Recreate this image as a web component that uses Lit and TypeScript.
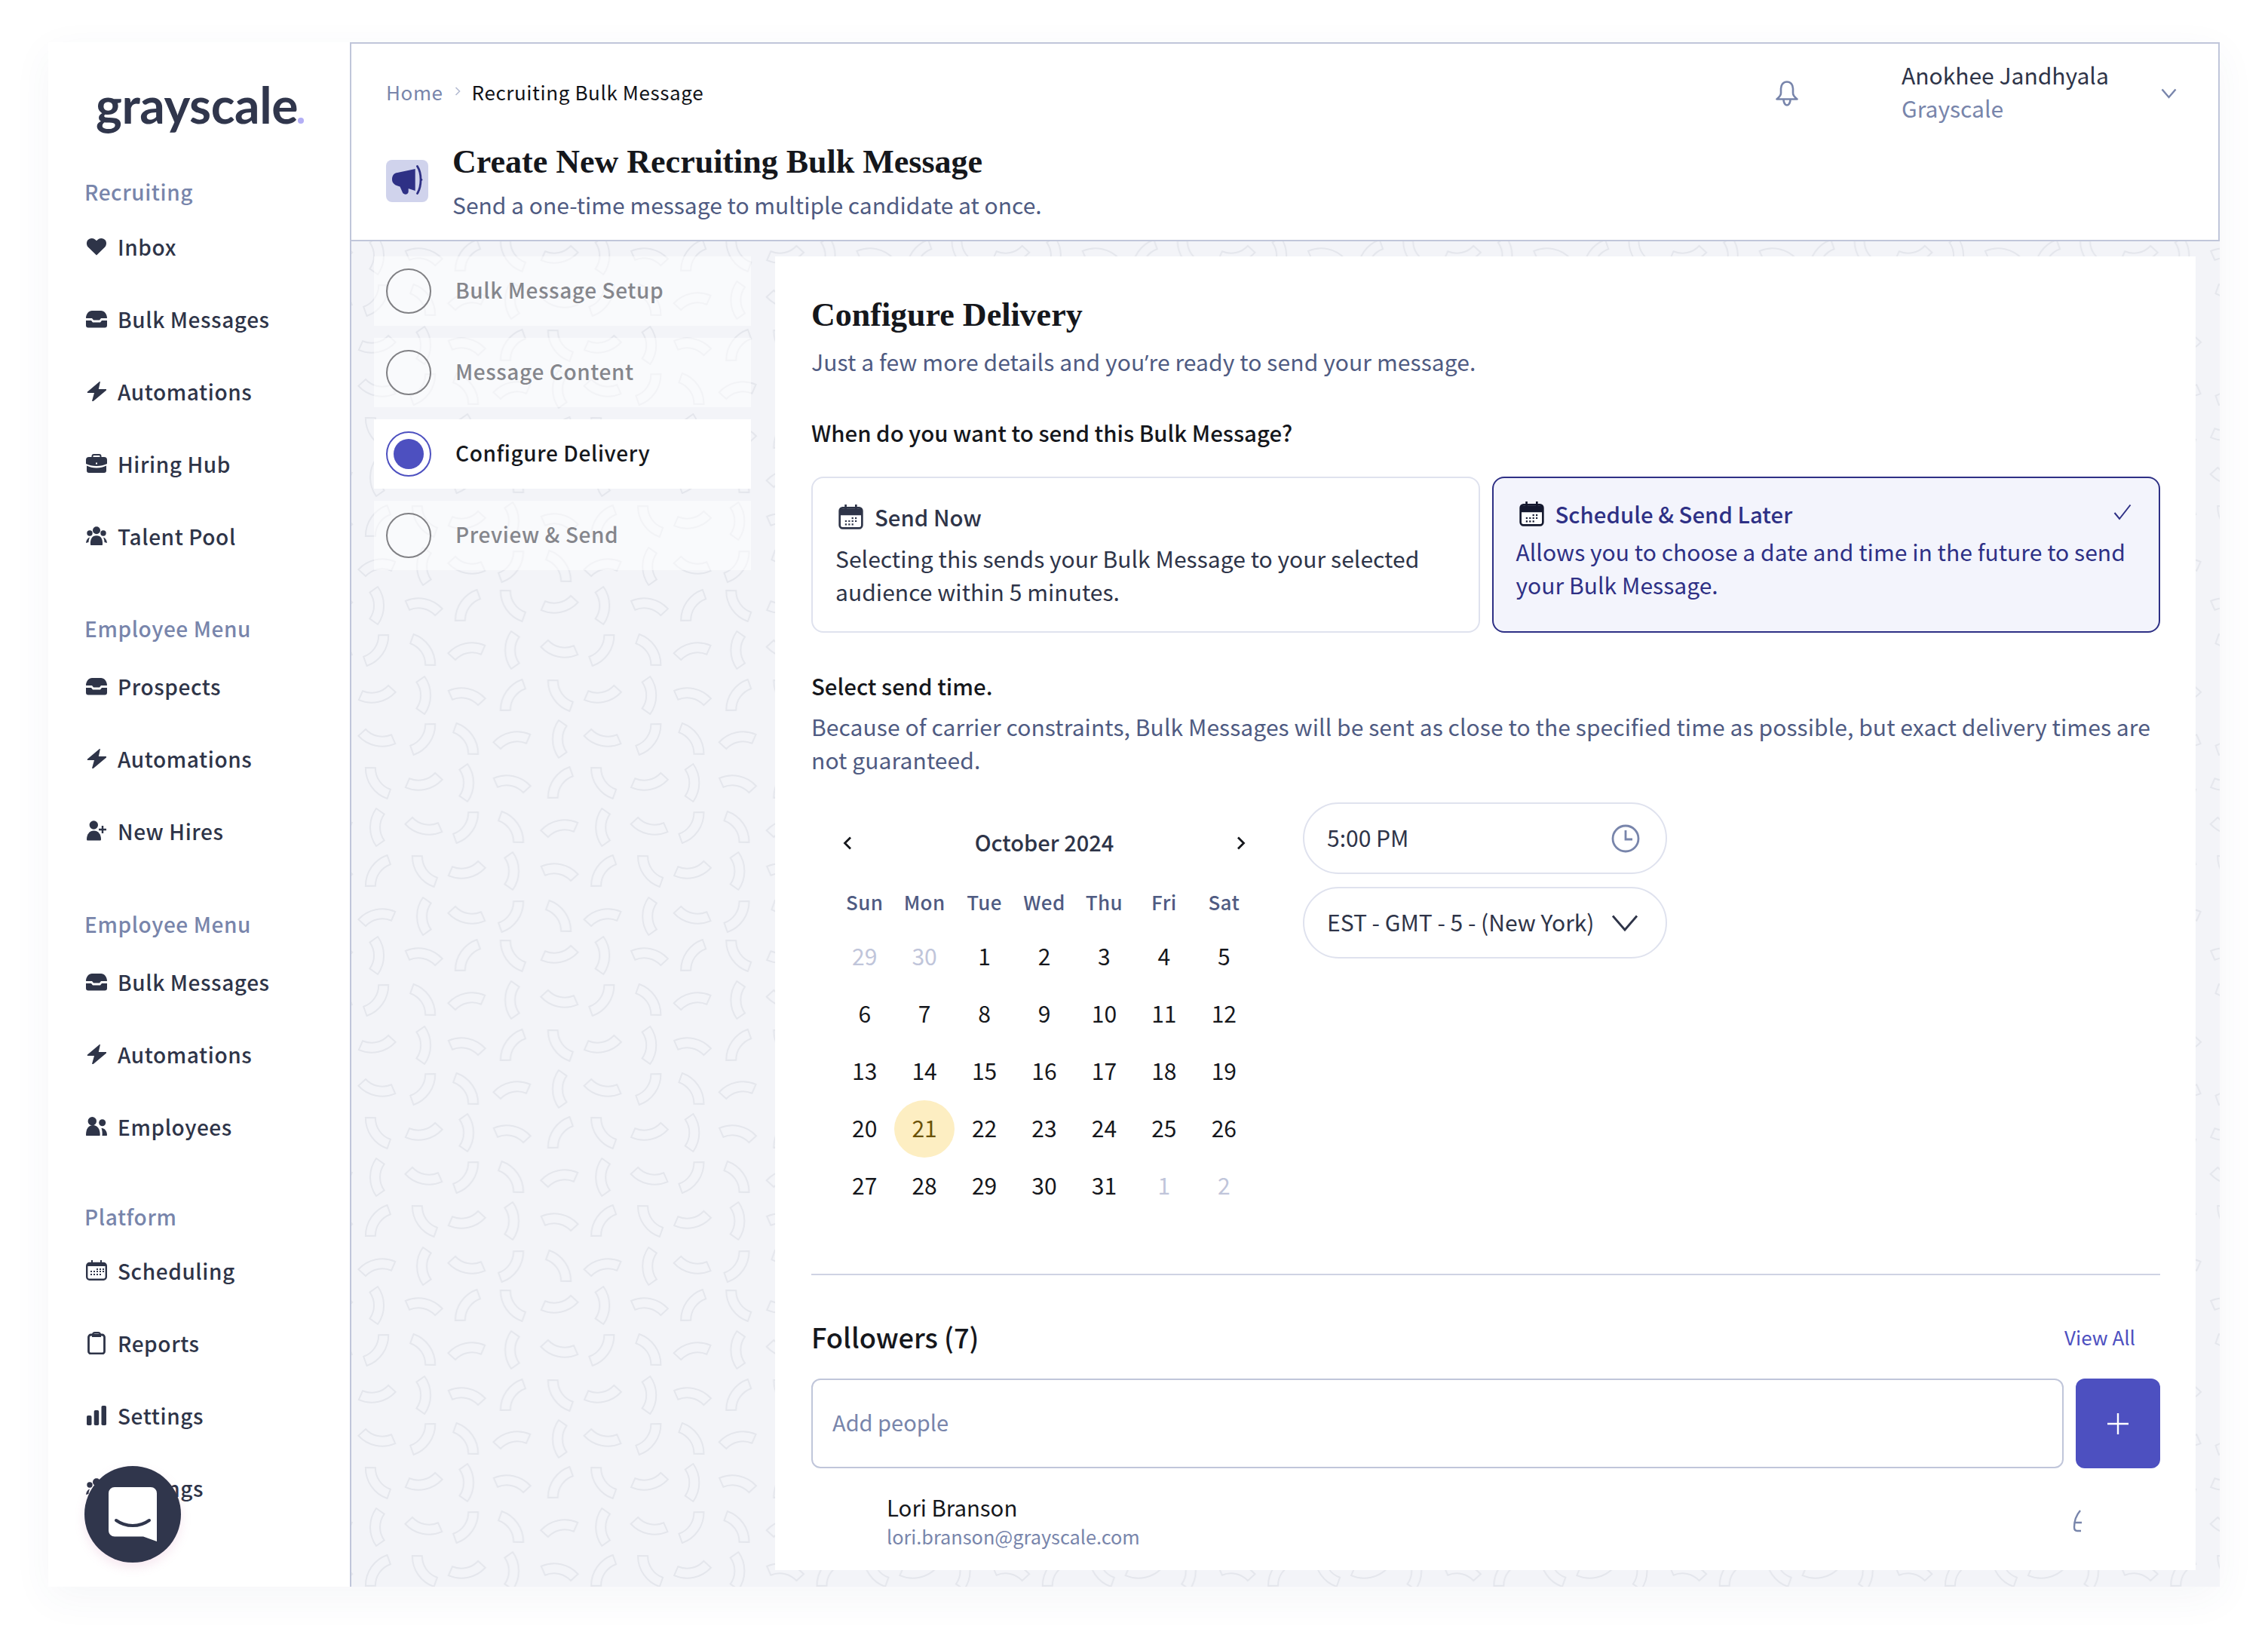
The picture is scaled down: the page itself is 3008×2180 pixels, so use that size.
import { LitElement, html, css, svg } from "lit";
import { customElement } from "lit/decorators.js";

const ICONS: Record<string, any> = {
  heart: svg`<path d="M14 24.5 3.200 14C.4 11.200.2 6.800 2.800 4 5.500 1.200 10 1.200 12.600 3.900L14 5.300l1.400-1.400C18 1.200 22.500 1.200 25.200 4c2.600 2.800 2.400 7.200-.4 10Z" fill="currentColor"/>`,
  inbox: svg`<path d="M0 11C0 5 4 1 8 1h12c4 0 8 4 8 10h-8l-2 2.400h-8L8 11Z" fill="currentColor"/><path d="M0 14h7l2 2.400h10L21 14h7v6.500a3 3 0 0 1-3 3H3a3 3 0 0 1-3-3Z" fill="currentColor"/>`,
  bolt: svg`<path d="M17 0 1 13.500c-.6.6-.3 1.500.5 1.500H10L7.200 25c-.3 1 .8 1.600 1.500 1L26 11.500c.6-.6.3-1.500-.5-1.500H15.800L17.800.8c.2-.8-.2-1.200-.8-.8Z" fill="currentColor"/>`,
  brief: svg`<path d="M8.500 4.500V3a2 2 0 0 1 2-2h7a2 2 0 0 1 2 2v1.500" fill="none" stroke="currentColor" stroke-width="2"/><path d="M0 8a4 4 0 0 1 4-4h20a4 4 0 0 1 4 4v5c-4 2-9 3-14 3s-10-1-14-3Z" fill="currentColor"/><path d="M1 15.500c4 2 8 3 13 3s9-1 13-3V22a3 3 0 0 1-3 3H4a3 3 0 0 1-3-3Z" fill="currentColor"/><path d="M13 11.500h2v2h-2Z" fill="#fff"/>`,
  users: svg`<circle cx="14" cy="5.200" r="5" fill="currentColor"/><circle cx="5" cy="9" r="3.700" fill="currentColor"/><circle cx="23" cy="9" r="3.700" fill="currentColor"/><path d="M6 24c-.5-7 2-11.700 8-11.700S22.500 17 22 24c0 .6-.5 1-1 1H7c-.5 0-1-.4-1-1Z" fill="currentColor"/><path d="M0 22c.5-4 2-6.500 5-7.500-1 2.500-1.500 4.500-1.500 6.500ZM28 22c-.5-4-2-6.500-5-7.500 1 2.500 1.500 4.500 1.500 6.500Z" fill="currentColor"/>`,
  add: svg`<circle cx="10.300" cy="6" r="5.700" fill="currentColor"/><path d="M1 25c0-7 4-11.500 9.500-11.500S20 18 20 25c0 1-.6 1.500-1.500 1.500h-16C1.600 26.500 1 26 1 25Z" fill="currentColor"/><path d="M22 7v10M17 12h10" stroke="currentColor" stroke-width="2.400" fill="none"/>`,
  team: svg`<circle cx="8.300" cy="5.800" r="5.700" fill="currentColor"/><circle cx="21.700" cy="7.700" r="4.500" fill="currentColor"/><path d="M0 24c0-8 3.500-13 9.300-13s9.400 5 9.400 13c0 .6-.4 1-1 1H1c-.6 0-1-.4-1-1Z" fill="currentColor"/><path d="M20.500 15c4-.5 7.500 4 7.500 9 0 .5-.4 1-1 1h-5.500c.5-3.500 0-7-1-10Z" fill="currentColor"/>`,
  cal: svg`<rect x="1.200" y="4" width="25.600" height="21.800" rx="3.500" fill="none" stroke="currentColor" stroke-width="2.400"/><path d="M2 5h24v3H2ZM7 0h2v5H7ZM19 0h2v5h-2Z" fill="currentColor"/><path d="M6 14h2v2H6ZM10 14h2v2h-2ZM14 14h2v2h-2ZM18 14h2v2h-2ZM22 14h2v2h-2ZM6 18h2v2H6ZM10 18h2v2h-2ZM14 18h2v2h-2ZM18 18h2v2h-2ZM14 11h2v2h-2ZM18 11h2v2h-2ZM22 11h2v2h-2Z" fill="currentColor"/>`,
  clip: svg`<rect x="1.500" y="4" width="21" height="25" rx="3" fill="none" stroke="currentColor" stroke-width="2.800"/><path d="M7 4c0-2 1.500-3 3-3h4c1.500 0 3 1 3 3v2H7Z" fill="none" stroke="currentColor" stroke-width="2"/>`,
  bars: svg`<rect x="0" y="13" width="6.500" height="13" rx="1.800" fill="currentColor"/><rect x="9.700" y="6" width="6.500" height="20" rx="1.800" fill="currentColor"/><rect x="19.500" y="0" width="6.500" height="26" rx="1.800" fill="currentColor"/>`,
};
const ICON_BOX: Record<string, number[]> = {
  heart: [28, 26], inbox: [28, 24], bolt: [26, 26], brief: [28, 26], users: [28, 26], add: [28, 27], team: [28, 25], cal: [28, 27], clip: [24, 30], bars: [26, 26],
};

const icon = (name: string) => {
  const [w, h] = ICON_BOX[name];
  return html`<svg class="ic" width=${w} height=${h} viewBox="0 0 ${w} ${h}">${ICONS[name]}</svg>`;
};

const NAV = [
  { title: "Recruiting", items: [["heart", "Inbox"], ["inbox", "Bulk Messages"], ["bolt", "Automations"], ["brief", "Hiring Hub"], ["users", "Talent Pool"]] },
  { title: "Employee Menu", items: [["inbox", "Prospects"], ["bolt", "Automations"], ["add", "New Hires"]] },
  { title: "Employee Menu", items: [["inbox", "Bulk Messages"], ["bolt", "Automations"], ["team", "Employees"]] },
  { title: "Platform", items: [["cal", "Scheduling"], ["clip", "Reports"], ["bars", "Settings"], ["users", "Settings"]] },
];

const STEPS = [
  ["Bulk Message Setup", false],
  ["Message Content", false],
  ["Configure Delivery", true],
  ["Preview & Send", false],
] as const;

const WEEK = ["Sun", "Mon", "Tue", "Wed", "Thu", "Fri", "Sat"];
const DAYS: [string, string][] = [
  ["29", "off"], ["30", "off"],
  ...Array.from({ length: 31 }, (_, i) => [String(i + 1), i === 20 ? "today" : ""] as [string, string]),
  ["1", "off"], ["2", "off"],
];

const rad = (d: number) => (d * Math.PI) / 180;
const pt = (r: number, a: number) => `${(r * Math.cos(rad(a))).toFixed(2)} ${(r * Math.sin(rad(a)) - 34).toFixed(2)}`;
const ARC = `M${pt(43, 125.5)}A43 43 0 0 0 ${pt(43, 54.5)}L${pt(30, 54.5)}A30 30 0 0 1 ${pt(30, 125.5)}Z`;
const PAT_X = [29, 91, 148, 208, 271];
const PAT_ROWS: [number, number[]][] = [
  [32, [12, -55, -125, 168, 90]],
  [90, [55, -12, -90, 192, 125]],
  [149, [90, 12, -55, -125, 168]],
  [207, [125, 55, -12, -90, 192]],
  [267, [168, 90, 12, -55, -125]],
  [319, [-90, 192, 125, 55, -12]],
  [378, [-55, -125, 168, 90, 12]],
  [438, [-12, -90, 192, 125, 55]],
];

const pattern = html`<svg class="pattern" width="100%" height="100%">
  <defs>
    <pattern id="arcs" width="299.3" height="464" patternUnits="userSpaceOnUse" patternTransform="translate(5 1092)">
      ${PAT_ROWS.map(([y, row]) =>
        row.map((a, i) => svg`<path d=${ARC} transform="translate(${PAT_X[i]} ${y}) rotate(${a})" fill="none" stroke="#e4e6ec" stroke-width="2"/>`)
      )}
    </pattern>
  </defs>
  <rect width="100%" height="100%" fill="url(#arcs)"/>
</svg>`;

const bigCal = html`<svg class="cardic" width="33" height="33" viewBox="0 0 30 30">
  <rect x="1.500" y="4" width="27" height="24.500" rx="3.500" fill="#fff" stroke="currentColor" stroke-width="2.400"/>
  <path d="M2 5h26v8H2ZM7.500 0h2.400v6H7.500ZM20 0h2.400v6H20Z" fill="currentColor"/>
  <path d="M8 19h2v2H8ZM12 19h2v2h-2ZM16 19h2v2h-2ZM20 19h2v2h-2ZM8 23h2v2H8ZM12 23h2v2h-2ZM16 23h2v2h-2ZM16 15.500h2v2h-2ZM20 15.500h2v2h-2Z" fill="currentColor"/>
</svg>`;

@customElement("app-root")
export class AppRoot extends LitElement {
  static styles = css`
    :host {
      display: block;
      width: 3008px;
      height: 2180px;
      background: #fff;
      font-family: "Noto Sans CJK SC", "Noto Sans", sans-serif;
      color: #2e3448;
      padding: 56px 0 0 64px;
      box-sizing: border-box;
    }
    * { box-sizing: border-box; }
    .shell {
      display: flex;
      width: 2880px;
      height: 2048px;
      background: #fff;
      box-shadow: 0 14px 50px rgba(60, 70, 110, 0.05);
    }
    .side {
      position: relative;
      width: 400px;
      flex: none;
      padding-left: 48px;
      background: #fff;
    }
    .logo {
      display: flex;
      align-items: baseline;
      height: 175px;
      padding: 41px 0 0 15px;
      font-family: "Lato", sans-serif;
      font-weight: 700;
      font-size: 66px;
      line-height: 84px;
      letter-spacing: -0.4px;
      color: #30364c;
    }
    .logo i {
      width: 8px;
      height: 8px;
      margin-left: 0;
      border-radius: 50%;
      background: #b3aef5;
    }
    .sec-title {
      height: 48px;
      line-height: 46px;
      font-size: 28px;
      font-weight: 500;
      letter-spacing: 0.6px;
      color: #7885ab;
    }
    .sec:nth-of-type(1) .sec-title { margin-bottom: 1px; }
    .sec:nth-of-type(2) { margin-top: 50px; }
    .sec:nth-of-type(2) .sec-title { margin-bottom: 5px; }
    .sec:nth-of-type(3) { margin-top: 51px; }
    .sec:nth-of-type(3) .sec-title { margin-bottom: 5px; }
    .sec:nth-of-type(4) { margin-top: 47px; }
    .item {
      display: flex;
      align-items: center;
      height: 96px;
      padding-bottom: 3px;
      font-size: 28px;
      font-weight: 500;
      letter-spacing: 0.6px;
    }
    .ibox {
      display: flex;
      justify-content: center;
      width: 30px;
      margin: 0 13px 0 1px;
      flex: none;
    }
    .chat {
      position: absolute;
      left: 48px;
      top: 1888px;
      width: 128px;
      height: 128px;
      border-radius: 50%;
      background: #30364c;
      box-shadow: 0 6px 14px rgba(210, 120, 170, 0.18);
      display: flex;
      align-items: center;
      justify-content: center;
    }
    .main {
      flex: 1;
      display: flex;
      flex-direction: column;
      min-width: 0;
      border-left: 2px solid #c0c6da;
    }
    .head {
      display: flex;
      justify-content: space-between;
      height: 264px;
      margin-left: -2px;
      padding-left: 46px;
      background: #fff;
      border: 2px solid #c0c6da;
    }
    .crumbs {
      display: flex;
      align-items: center;
      height: 40px;
      margin-top: 44px;
      padding-bottom: 2px;
      font-size: 26px;
      letter-spacing: 0.6px;
      color: #111318;
    }
    .crumbs a { color: #7885ab; }
    .crumbs svg { margin: 0 15px; }
    .titleRow {
      display: flex;
      align-items: center;
      gap: 32px;
      margin-top: 45px;
    }
    .mega {
      display: flex;
      width: 56px;
      height: 56px;
      border-radius: 8px;
      background: #d0d3ec;
    }
    h1, h2 {
      margin: 0;
      font-family: "Liberation Serif", serif;
      font-weight: 700;
      font-size: 44px;
      color: #15171c;
    }
    h1 { line-height: 56px; }
    h2 { line-height: 60px; }
    .sub {
      font-size: 30px;
      line-height: 44px;
      color: #4f5b82;
    }
    .apos { font-family: "Open Sans", sans-serif; }
    .titleRow .sub { margin-top: 6px; }
    .user {
      display: flex;
      align-items: center;
      align-self: flex-start;
      padding: 22px 55px 0 0;
    }
    .user .bell { margin-right: 137px; }
    .who {
      width: 344px;
      margin: -3px 0 3px;
      font-size: 30px;
      line-height: 44px;
    }
    .who span { display: block; color: #7885ab; }
    .body {
      position: relative;
      flex: 1;
      min-height: 0;
      display: flex;
      gap: 32px;
      padding: 20px 32px 22px 30px;
      background: #f3f4f8;
      overflow: hidden;
    }
    .pattern { position: absolute; inset: 0; }
    .steps {
      position: relative;
      display: flex;
      flex-direction: column;
      gap: 16px;
      width: 500px;
      flex: none;
    }
    .step {
      display: flex;
      align-items: center;
      gap: 32px;
      height: 92px;
      padding-left: 16px;
      background: rgba(255, 255, 255, 0.5);
      font-size: 28px;
      font-weight: 500;
      color: #85868c;
      letter-spacing: 0.6px;
    }
    .step .l { margin-top: -4px; }
    .step.on { background: #fff; color: #15171c; }
    .dot {
      display: flex;
      align-items: center;
      justify-content: center;
      width: 60px;
      height: 60px;
      border-radius: 50%;
      border: 2px solid #808084;
    }
    .on .dot { border-color: #4d50c0; }
    .on .dot::after {
      content: "";
      width: 40px;
      height: 40px;
      border-radius: 50%;
      background: #4d50c0;
    }
    .content {
      position: relative;
      flex: 1;
      min-width: 0;
      padding: 48px 47px 0 48px;
      background: #fff;
      overflow: hidden;
    }
    .content > .sub { margin-top: 9px; letter-spacing: 0.1px; }
    .q {
      font-size: 29.4px;
      line-height: 44px;
      font-weight: 500;
      color: #15171c;
    }
    .q.first { margin-top: 48px; }
    .cards {
      display: flex;
      gap: 16px;
      margin-top: 37px;
    }
    .card {
      position: relative;
      flex: 1;
      height: 207px;
      padding: 29px 30px 0;
      border: 2px solid #dfe2ee;
      border-radius: 16px;
      font-size: 30px;
      line-height: 44px;
      letter-spacing: 0.05px;
    }
    .card.sel {
      padding-top: 25px;
      border-color: #2e3085;
      background: #f3f4fc;
      color: #2e3085;
    }
    .cardT {
      display: flex;
      align-items: center;
      gap: 15px;
      height: 44px;
      margin-bottom: 11px;
      padding-left: 4px;
      font-size: 29.3px;
      font-weight: 500;
    }
    .sel .cardT { margin-bottom: 6px; }
    .sel .cardic { color: #14182e; }
    .check { position: absolute; right: 36px; top: 34px; }
    .q.time { margin-top: 48px; }
    .desc {
      margin-top: 10px;
      font-size: 30px;
      line-height: 44px;
      letter-spacing: 0.09px;
      color: #4f5b82;
    }
    .when {
      display: flex;
      gap: 65px;
      margin-top: 35px;
      align-items: flex-start;
    }
    .calendar {
      width: 556px;
      margin-left: 31px;
      flex: none;
    }
    .month {
      display: flex;
      align-items: center;
      justify-content: space-between;
      height: 108px;
      padding: 0 11px 4px;
      font-size: 29px;
      font-weight: 500;
    }
    .month svg { margin-top: 4px; }
    .grid {
      display: grid;
      grid-template-columns: repeat(7, 1fr);
      text-align: center;
    }
    .wk {
      height: 52px;
      margin-bottom: 7px;
      line-height: 48px;
      font-size: 26px;
      font-weight: 500;
      color: #4f5b82;
      letter-spacing: 0.4px;
    }
    .d {
      height: 76px;
      line-height: 72px;
      font-size: 30px;
      color: #15171c;
      border-radius: 50%;
    }
    .d.off { color: #c0c5da; }
    .d.today { background: #fdeec2; color: #6b5208; }
    .fields {
      display: flex;
      flex-direction: column;
      gap: 17px;
      width: 483px;
    }
    .field {
      display: flex;
      align-items: center;
      justify-content: space-between;
      height: 95px;
      padding: 0 34px 4px 30px;
      border: 2px solid #dfe2ee;
      border-radius: 48px;
      font-size: 30px;
      color: #2e3448;
    }
    .field svg { margin-top: 4px; }
    .field.tz { padding-right: 36px; }
    .rule {
      height: 2px;
      margin-top: 78px;
      background: #cfd3e3;
    }
    .fhead {
      display: flex;
      align-items: center;
      justify-content: space-between;
      height: 60px;
      margin-top: 53px;
      padding: 0 33px 4px 0;
      font-size: 36.2px;
      font-weight: 500;
      color: #15171c;
    }
    .fhead a {
      font-size: 26px;
      font-weight: 400;
      color: #4d50c0;
    }
    .addRow {
      display: flex;
      gap: 16px;
      margin-top: 24px;
    }
    .input {
      flex: 1;
      display: flex;
      align-items: center;
      height: 119px;
      padding: 0 0 6px 26px;
      border: 2px solid #c0c6da;
      border-radius: 12px;
      font-size: 29px;
      color: #7885ab;
    }
    .plus {
      display: flex;
      align-items: center;
      justify-content: center;
      width: 112px;
      height: 119px;
      border-radius: 12px;
      background: #4d50c0;
    }
    .person {
      position: relative;
      margin-top: 29px;
      padding-left: 100px;
    }
    .person b {
      display: block;
      font-size: 29.4px;
      line-height: 44px;
      font-weight: 400;
      color: #15171c;
    }
    .person span {
      display: block;
      margin-top: -3px;
      font-size: 25.3px;
      line-height: 40px;
      color: #7885ab;
    }
    .frag { position: absolute; left: 1672px; top: 25px; }
  `;

  render() {
    return html`<div class="shell">
      <aside class="side">
        <div class="logo">grayscale<i></i></div>
        ${NAV.map(
          (s) => html`<section class="sec">
            <div class="sec-title">${s.title}</div>
            ${s.items.map((it) => html`<div class="item"><span class="ibox">${icon(it[0])}</span>${it[1]}</div>`)}
          </section>`
        )}
        <div class="chat">
          <svg width="64" height="72" viewBox="0 0 64 72">
            <path d="M8 0h48a8 8 0 0 1 8 8v64L46 65.500H8a8 8 0 0 1-8-8V8a8 8 0 0 1 8-8Z" fill="#fff"/>
            <path d="M10 44c7 5 14 7 22 7s15-2 22-7" fill="none" stroke="#30364c" stroke-width="4" stroke-linecap="round"/>
          </svg>
        </div>
      </aside>
      <div class="main">
        <header class="head">
          <div>
            <div class="crumbs">
              <a>Home</a>
              <svg width="8" height="12" viewBox="0 0 8 12"><path d="M1.500 1 6.500 6l-5 5" fill="none" stroke="#b4bbd2" stroke-width="1.600"/></svg>
              <span>Recruiting Bulk Message</span>
            </div>
            <div class="titleRow">
              <div class="mega">
                <svg width="56" height="56" viewBox="0 0 56 56">
                  <path d="M8 26C8 20 11 17.500 15 17L38.700 12V41L29.700 38V42C29.700 46 24 47 22 43.500L18.500 35.500C12 34 8 31 8 26Z" fill="#2e3085"/>
                  <path d="M41.500 8.500C45 14 46 20 46 26C46 33 45 39 41.500 44.500" fill="none" stroke="#2e3085" stroke-width="2.800" stroke-linecap="round"/>
                  <circle cx="46.800" cy="26.300" r="1.500" fill="#2e3085"/>
                </svg>
              </div>
              <div>
                <h1>Create New Recruiting Bulk Message</h1>
                <div class="sub">Send a one-time message to multiple candidate at once.</div>
              </div>
            </div>
          </div>
          <div class="user">
            <svg class="bell" width="30" height="34" viewBox="0 0 30 34" fill="none" stroke="#7885ab" stroke-width="2.600" stroke-linejoin="round">
              <path d="M15 1.500c-5 0-8 4-8 9v6c0 3-2.500 5.500-5.500 8h27c-3-2.500-5.500-5-5.500-8v-6c0-5-3-9-8-9Z"/>
              <path d="M10.500 25c0 4 2 7.500 4.500 7.500s4.500-3.500 4.500-7.500"/>
            </svg>
            <div class="who">Anokhee Jandhyala<span>Grayscale</span></div>
            <svg width="21" height="14" viewBox="0 0 21 14"><path d="M1.500 1.500 10.500 12l9-10.500" fill="none" stroke="#7885ab" stroke-width="2.400"/></svg>
          </div>
        </header>
        <div class="body">
          ${pattern}
          <nav class="steps">
            ${STEPS.map(
              ([label, on]) => html`<div class="step ${on ? "on" : ""}"><span class="dot"></span><span class="l">${label}</span></div>`
            )}
          </nav>
          <main class="content">
            <h2>Configure Delivery</h2>
            <div class="sub">Just a few more details and you<span class="apos">’</span>re ready to send your message.</div>
            <div class="q first">When do you want to send this Bulk Message?</div>
            <div class="cards">
              <div class="card">
                <div class="cardT">${bigCal}Send Now</div>
                Selecting this sends your Bulk Message to your selected audience within 5 minutes.
              </div>
              <div class="card sel">
                <div class="cardT">${bigCal}Schedule &amp; Send Later</div>
                Allows you to choose a date and time in the future to send your Bulk Message.
                <svg class="check" width="24" height="22" viewBox="0 0 24 22"><path d="M1.500 12 8 20 22.500 1.500" fill="none" stroke="#2e3085" stroke-width="2"/></svg>
              </div>
            </div>
            <div class="q time">Select send time.</div>
            <div class="desc">Because of carrier constraints, Bulk Messages will be sent as close to the specified time as possible, but exact delivery times are not guaranteed.</div>
            <div class="when">
              <div class="calendar">
                <div class="month">
                  <svg width="12" height="18" viewBox="0 0 12 18"><path d="M10 1.500 2.500 9l7.500 7.500" fill="none" stroke="#15171c" stroke-width="2.800"/></svg>
                  <span>October 2024</span>
                  <svg width="12" height="18" viewBox="0 0 12 18"><path d="M2 1.500 9.500 9 2 16.500" fill="none" stroke="#15171c" stroke-width="2.800"/></svg>
                </div>
                <div class="grid">
                  ${WEEK.map((w) => html`<div class="wk">${w}</div>`)}
                  ${DAYS.map(([d, c]) => html`<div class="d ${c}">${d}</div>`)}
                </div>
              </div>
              <div class="fields">
                <div class="field">
                  5:00 PM
                  <svg width="38" height="38" viewBox="0 0 38 38" fill="none" stroke="#7885ab" stroke-width="2.800"><circle cx="19" cy="19" r="17"/><path d="M19 8v12h9"/></svg>
                </div>
                <div class="field tz">
                  EST - GMT - 5 - (New York)
                  <svg width="36" height="24" viewBox="0 0 36 24"><path d="M2 2.500 18 21 34 2.500" fill="none" stroke="#2e3448" stroke-width="2.800"/></svg>
                </div>
              </div>
            </div>
            <div class="rule"></div>
            <div class="fhead">Followers (7)<a>View All</a></div>
            <div class="addRow">
              <div class="input">Add people</div>
              <div class="plus"><svg width="30" height="30" viewBox="0 0 30 30"><path d="M15 1v28M1 15h28" stroke="#fff" stroke-width="2.400"/></svg></div>
            </div>
            <div class="person">
              <b>Lori Branson</b>
              <span>lori.branson@grayscale.com</span>
              <svg class="frag" width="14" height="32" viewBox="0 0 14 32"><path d="M11 2C5 9 3 16 3 24c0 3 1.500 5 4 5h5M3 18h10" fill="none" stroke="#7885ab" stroke-width="2.400"/></svg>
            </div>
          </main>
        </div>
      </div>
    </div>`;
  }
}
